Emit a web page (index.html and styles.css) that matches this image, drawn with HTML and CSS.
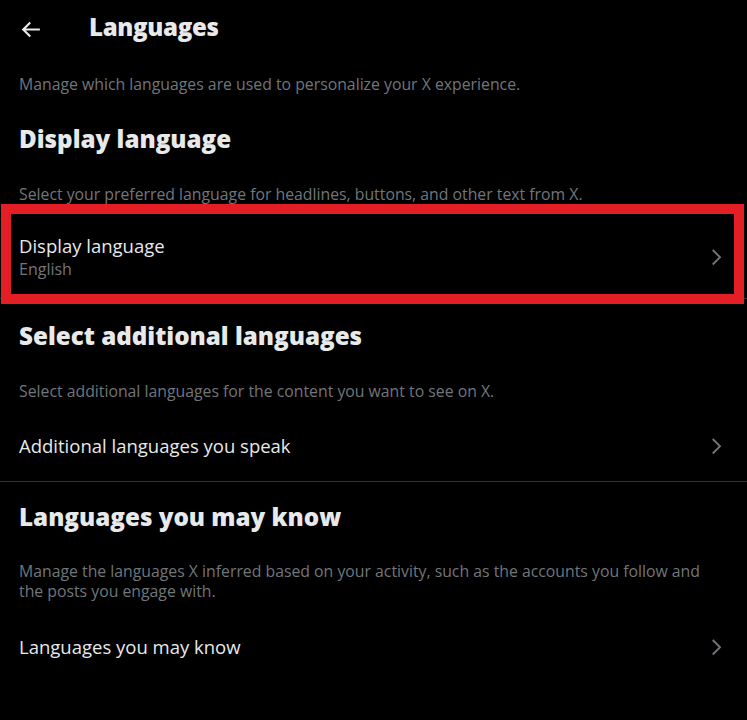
FILE: index.html
```html
<!DOCTYPE html>
<html lang="en">
<head>
<meta charset="utf-8">
<title>Languages</title>
<link rel="stylesheet" href="styles.css">
</head>
<body>
<div class="page">
  <header class="header">
    <button class="back" aria-label="Back">
      <svg viewBox="0 0 24 24" class="back-icon"><path d="M7.414 13l5.043 5.04-1.414 1.42L3.586 12l7.457-7.46 1.414 1.42L7.414 11H21v2H7.414z"/></svg>
    </button>
    <h1 class="title">Languages</h1>
  </header>

  <p class="intro">Manage which languages are used to personalize your X experience.</p>

  <section class="section section-first">
    <h2 class="heading">Display language</h2>
    <p class="desc">Select your preferred language for headlines, buttons, and other text from X.</p>
    <div class="row row-double">
      <div class="row-text">
        <div class="row-label">Display language</div>
        <div class="row-sub">English</div>
      </div>
      <svg viewBox="0 0 24 24" class="chevron"><path d="M14.586 12L7.543 4.96l1.414-1.42L17.414 12l-8.457 8.46-1.414-1.42L14.586 12z"/></svg>
    </div>
  </section>

  <section class="section">
    <h2 class="heading">Select additional languages</h2>
    <p class="desc">Select additional languages for the content you want to see on X.</p>
    <div class="row row-single">
      <div class="row-label">Additional languages you speak</div>
      <svg viewBox="0 0 24 24" class="chevron"><path d="M14.586 12L7.543 4.96l1.414-1.42L17.414 12l-8.457 8.46-1.414-1.42L14.586 12z"/></svg>
    </div>
  </section>

  <section class="section section-last">
    <h2 class="heading">Languages you may know</h2>
    <p class="desc">Manage the languages X inferred based on your activity, such as the accounts you follow and the posts you engage with.</p>
    <div class="row row-single row-last">
      <div class="row-label">Languages you may know</div>
      <svg viewBox="0 0 24 24" class="chevron"><path d="M14.586 12L7.543 4.96l1.414-1.42L17.414 12l-8.457 8.46-1.414-1.42L14.586 12z"/></svg>
    </div>
  </section>

  <div class="highlight"></div>
</div>
</body>
</html>
```
FILE: styles.css
```css
* { box-sizing: border-box; margin: 0; padding: 0; }
html, body { background: #000; }
body {
  font-family: "Open Sans", "Noto Sans", sans-serif;
  color: #e7e9ea;
  width: 747px;
  height: 720px;
  overflow: hidden;
}
.page { position: relative; min-height: 720px; }

.header {
  height: 53px;
  display: flex;
  align-items: center;
  padding-left: 18px;
}
.back {
  background: none;
  border: 0;
  width: 25px;
  height: 25px;
  margin-top: 5px;
  display: flex;
}
.back-icon { width: 25px; height: 25px; fill: #e7e9ea; }
.title {
  margin-left: 46px;
  font-size: 24px;
  font-weight: 800;
  line-height: 30px;
  letter-spacing: -0.3px;
}

.intro {
  margin-top: 21px;
  padding: 0 19px;
  font-size: 15.8px;
  line-height: 20px;
  color: #71767b;
}

.section {
  border-bottom: 1px solid #2f3336;
  padding-top: 22px;
}
.section-first { padding-top: 30px; }
.section-last { border-bottom: 0; padding-top: 20px; }

.heading {
  padding: 0 19px;
  font-size: 24.2px;
  font-weight: 800;
  line-height: 30px;
}
.desc {
  margin-top: 30px;
  padding: 0 30px 0 19px;
  font-size: 15.8px;
  line-height: 20px;
  color: #71767b;
}
.section-last .desc { margin-top: 29px; }

.row {
  margin-top: 10px;
  display: flex;
  align-items: center;
  justify-content: space-between;
  padding-left: 19px;
  padding-right: 20px;
}
.row-double { padding-top: 21px; padding-bottom: 19px; }
.row-single { padding-top: 24px; padding-bottom: 23px; }
.row-last { padding-top: 25px; }
.row-text { display: flex; flex-direction: column; gap: 2px; }
.row-label {
  font-size: 18.5px;
  line-height: 22px;
  color: #e7e9ea;
}
.row-sub {
  font-size: 16px;
  line-height: 20px;
  color: #71767b;
}
.chevron { width: 22.5px; height: 22.5px; fill: #71767b; flex: none; }

.highlight {
  position: absolute;
  left: 1px;
  top: 204px;
  width: 743px;
  height: 100px;
  border: 10px solid #e31e24;
}
```
